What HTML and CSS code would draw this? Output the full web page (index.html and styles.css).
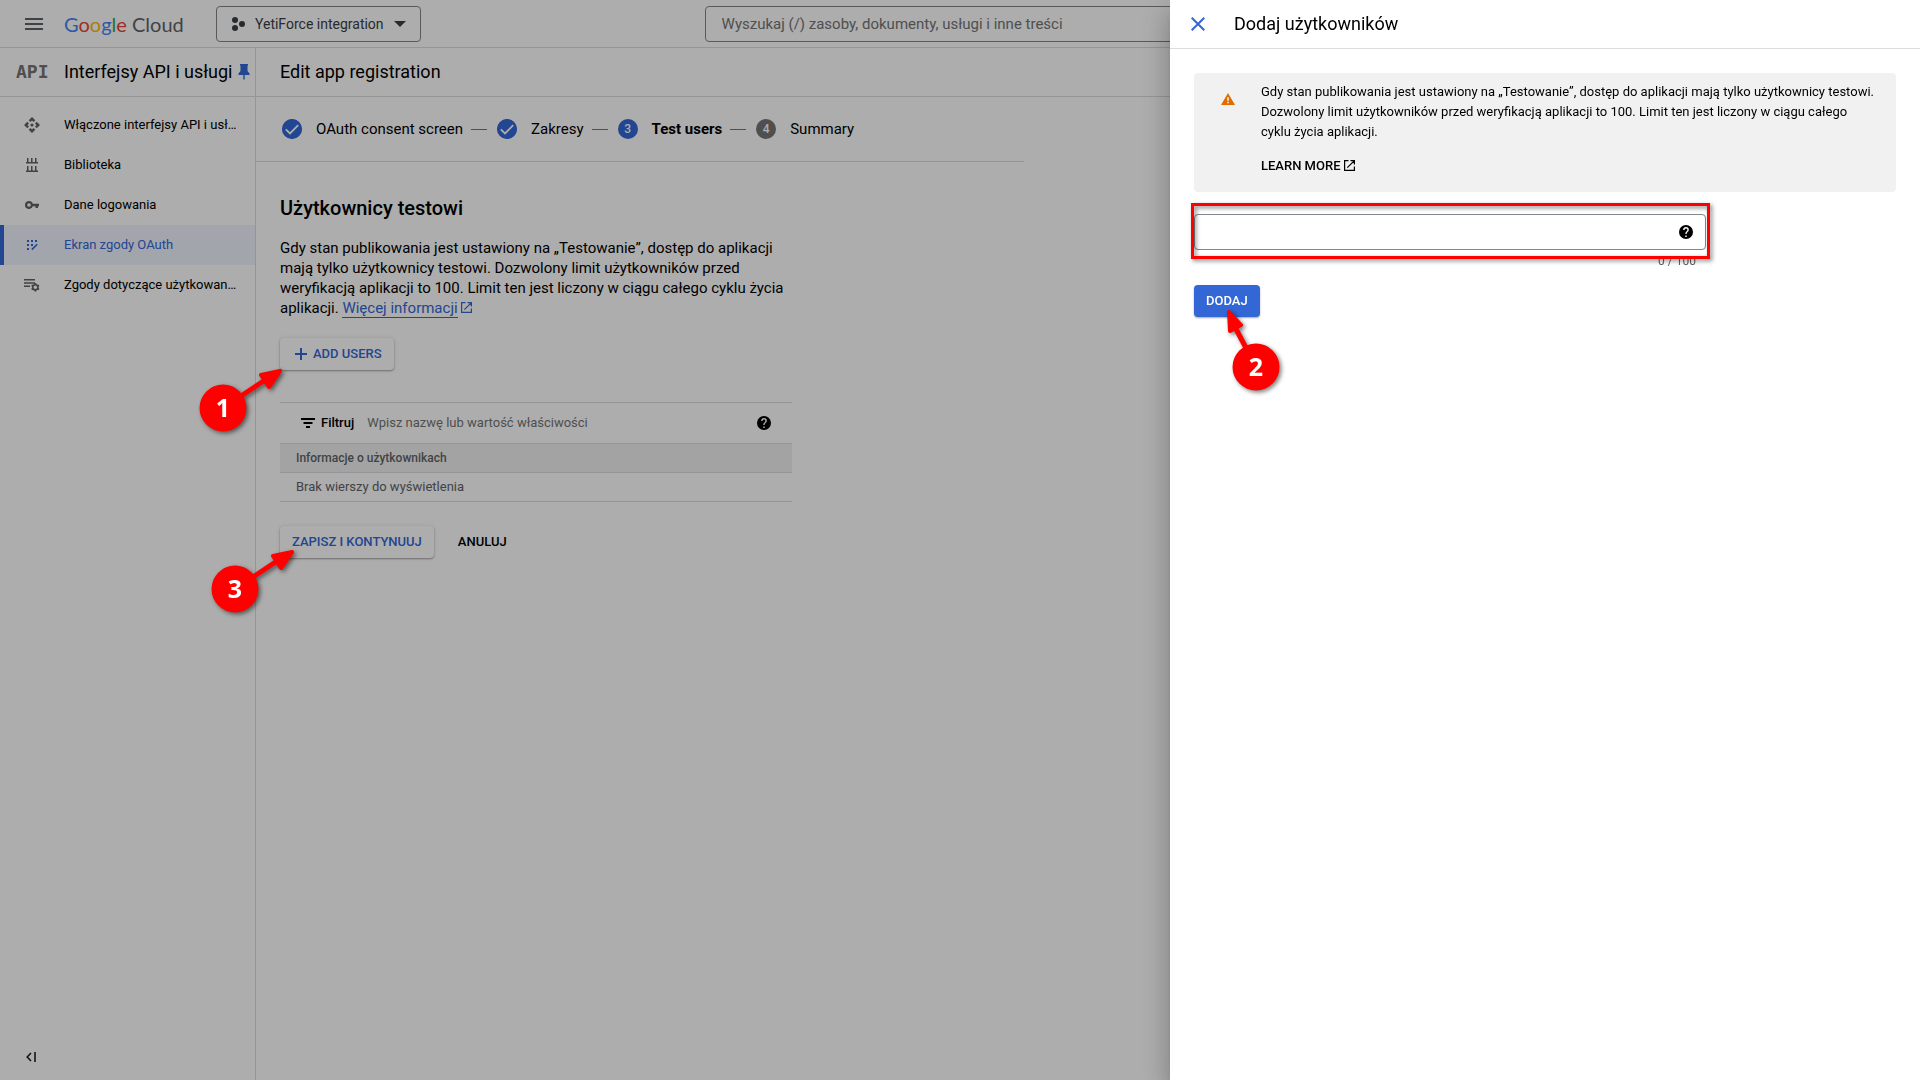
FILE: index.html
```html
<!DOCTYPE html>
<html lang="pl">
<head>
<meta charset="utf-8">
<meta name="viewport" content="width=device-width, initial-scale=1">
<title>Edit app registration</title>
<link rel="stylesheet" href="styles.css">
</head>
<body>
<svg class="defs" aria-hidden="true">
  <symbol id="i-check" viewBox="0 0 20 20"><circle cx="10" cy="10" r="10" fill="#3367d6"/><path d="M3.8 10.3 8 14.4 16.2 6.2" fill="none" stroke="#fff" stroke-width="1.8"/></symbol>
  <symbol id="i-help" viewBox="2 2 20 20"><path fill="currentColor" d="M12 2a10 10 0 1 0 0 20 10 10 0 0 0 0-20zm1 17h-2v-2h2zm2.07-7.75-.9.92C13.45 12.9 13 13.5 13 15h-2v-.5c0-1.1.45-2.1 1.17-2.83l1.24-1.26c.37-.36.59-.86.59-1.41a2 2 0 1 0-4 0H8a4 4 0 1 1 8 0c0 .88-.36 1.68-.93 2.25z"/></symbol>
  <symbol id="i-open" viewBox="0 0 11 11"><path d="M4.5.6H.6v9.800h9.800V6.500M6.500.6h3.900v3.900M10.200.8 3.300 7.700" fill="none" stroke="currentColor" stroke-width="1.200"/></symbol>
  <symbol id="i-arrow" viewBox="0 0 92 72"><path d="M28 44 70 16" stroke="red" stroke-width="5"/><path d="M85 7 66 11 74 23z" fill="red" stroke="red" stroke-width="4" stroke-linejoin="round"/><circle cx="28" cy="44" r="23.500" fill="red"/></symbol>
</svg>

<header class="topbar">
  <button class="icon-btn menu" aria-label="Menu"><svg width="18" height="12" viewBox="0 0 18 12"><path d="M0 0h18v2H0zm0 5h18v2H0zm0 5h18v2H0z" fill="#5f6368"/></svg></button>
  <a class="logo" href="#"><span class="blue">G</span><span class="red">o</span><span class="yellow">o</span><span class="blue">g</span><span class="green">l</span><span class="red">e</span> <span class="cloud">Cloud</span></a>
  <button class="project">
    <svg width="14" height="14" viewBox="0 0 14 14" fill="#3c4043"><circle cx="4" cy="3" r="3"/><circle cx="11" cy="7" r="3"/><circle cx="4" cy="11" r="3"/></svg>
    <span>YetiForce integration</span>
    <svg width="12" height="6" viewBox="0 0 12 6"><path d="M0 0h12L6 6z" fill="#3c4043"/></svg>
  </button>
  <input class="search" type="search" aria-label="Wyszukaj" placeholder="Wyszukaj (/) zasoby, dokumenty, usługi i inne treści">
</header>

<div class="shell">
  <nav class="sidebar" aria-label="Interfejsy API i usługi">
    <div class="side-head">
      <span class="api" aria-hidden="true">API</span>
      <h2 class="bar-title">Interfejsy API i usługi</h2>
      <svg width="12" height="16" viewBox="0 0 12 16"><path d="M2 0h8v1.500H9.500V7L11.500 9.500V11H6.700v4l-.7 1-.7-1v-4H.500V9.500L2.500 7V1.500H2z" fill="#3367d6"/></svg>
    </div>
    <ul class="nav">
      <li><a href="#" class="nav-item"><svg viewBox="0 0 16 16"><path d="M8 0l3.300 3.300L9.500 5 8 3.500 6.500 5 4.700 3.300zM8 16l3.300-3.300L9.500 11 8 12.500 6.500 11l-1.800 1.700zM0 8l3.300-3.300L5 6.500 3.500 8 5 9.500l-1.700 1.800zM16 8l-3.300-3.300L11 6.500 12.500 8 11 9.500l1.700 1.800z"/><circle cx="8" cy="8" r="1.600"/></svg><span>Włączone interfejsy API i usługi</span></a></li>
      <li><a href="#" class="nav-item"><svg viewBox="0 0 16 16"><path d="M3 1h1.500v4H7V1h1.500v4H11V1h1.500v4H14v1.500H2V5h1zM3 9h1.500v4.500H7V9h1.500v4.500H11V9h1.500v4.500H14V15H2v-1.500h1z"/></svg><span>Biblioteka</span></a></li>
      <li><a href="#" class="nav-item"><svg viewBox="0 0 16 16"><path fill-rule="evenodd" d="M5 4a4 4 0 0 1 3.800 2.800H15v2.400h-1V11h-2.500V9.200H8.800A4 4 0 1 1 5 4zm0 2.200a1.800 1.800 0 1 0 0 3.600 1.800 1.800 0 0 0 0-3.600z"/></svg><span>Dane logowania</span></a></li>
      <li><a href="#" class="nav-item active" aria-current="page"><svg viewBox="0 0 16 16"><path d="M3 3h2v2H3zm4 0h2v2H7zm4 0h2v2h-2zM3 7h2v2H3zm4 0h2v2H7zm-4 4h2v2H3z"/><path d="M7.800 12.600 13.200 7.200" stroke="currentColor" stroke-width="1.600"/></svg><span>Ekran zgody OAuth</span></a></li>
      <li><a href="#" class="nav-item"><svg viewBox="0 0 16 16"><path d="M0 2h11v1.500H0zm0 3.300h11v1.500H0zm0 3.300h6v1.500H0z"/><circle cx="11.300" cy="10.300" r="2.600" fill="none" stroke="currentColor" stroke-width="1.600"/><path d="M11.300 6v2m0 4.600v2M7.600 8.200l1.700 1m4 2.300 1.700 1M7.600 12.500l1.700-1m4-2.300 1.700-1" stroke="currentColor" stroke-width="1.800"/></svg><span>Zgody dotyczące użytkowania strony</span></a></li>
    </ul>
    <button class="icon-btn collapse" aria-label="Zwiń"><svg width="10" height="10" viewBox="0 0 10 10" fill="none" stroke="#202124" stroke-width="1.600"><path d="M5 1 1.200 5 5 9M9 0v10"/></svg></button>
  </nav>

  <main class="main">
    <div class="main-head"><h1 class="bar-title">Edit app registration</h1></div>
    <ol class="steps">
      <li><svg class="dot"><use href="#i-check"/></svg><span>OAuth consent screen</span></li>
      <li><svg class="dot"><use href="#i-check"/></svg><span>Zakresy</span></li>
      <li class="current"><b class="dot">3</b><span>Test users</span></li>
      <li class="todo"><b class="dot">4</b><span>Summary</span></li>
    </ol>
    <section class="content">
      <h2 class="section-title">Użytkownicy testowi</h2>
      <p class="lead">Gdy stan publikowania jest ustawiony na „Testowanie”, dostęp do aplikacji mają tylko użytkownicy testowi. Dozwolony limit użytkowników przed weryfikacją aplikacji to 100. Limit ten jest liczony w ciągu całego cyklu życia aplikacji. <a href="#" class="more"><span>Więcej informacji</span> <svg class="open"><use href="#i-open"/></svg></a></p>
      <div class="actions">
        <button class="btn raised add"><svg width="12" height="12" viewBox="0 0 12 12"><path d="M5 0h2v5h5v2H7v5H5V7H0V5h5z" fill="currentColor"/></svg>ADD USERS</button>
        <svg class="callout callout-add"><use href="#i-arrow"/><text x="28" y="53">1</text></svg>
      </div>
      <div class="filter">
        <svg width="14" height="10" viewBox="0 0 14 10"><path d="M0 0h14v2H0zm2.500 4h9v2h-9zM5 8h4v2H5z"/></svg>
        <label for="filter">Filtruj</label>
        <input id="filter" type="text" placeholder="Wpisz nazwę lub wartość właściwości">
        <svg class="help"><use href="#i-help"/></svg>
      </div>
      <table class="users">
        <thead><tr><th>Informacje o użytkownikach</th></tr></thead>
        <tbody><tr><td>Brak wierszy do wyświetlenia</td></tr></tbody>
      </table>
      <div class="actions">
        <button class="btn raised">ZAPISZ I KONTYNUUJ</button>
        <button class="btn plain">ANULUJ</button>
        <svg class="callout callout-save"><use href="#i-arrow"/><text x="28" y="53">3</text></svg>
      </div>
    </section>
  </main>
</div>

<div class="scrim"></div>

<aside class="panel" role="dialog" aria-labelledby="panel-title">
  <div class="panel-head">
    <button class="icon-btn" aria-label="Zamknij"><svg width="14" height="14" viewBox="0 0 14 14"><path d="M.7.7l12.600 12.600M13.300.7.700 13.300" stroke="#3367d6" stroke-width="2"/></svg></button>
    <h2 class="bar-title" id="panel-title">Dodaj użytkowników</h2>
  </div>
  <div class="panel-body">
    <div class="notice">
      <svg width="14" height="12" viewBox="0 0 14 12"><path d="M7 0l7 12H0z" fill="#e06c00"/><path d="M6.300 4.300h1.400v3.500H6.300zm0 4.500h1.400v1.400H6.300z" fill="#fff"/></svg>
      <div>
        <p>Gdy stan publikowania jest ustawiony na „Testowanie”, dostęp do aplikacji mają tylko użytkownicy testowi. Dozwolony limit użytkowników przed weryfikacją aplikacji to 100. Limit ten jest liczony w ciągu całego cyklu życia aplikacji.</p>
        <a class="learn" href="#">LEARN MORE <svg class="open"><use href="#i-open"/></svg></a>
      </div>
    </div>
    <div class="field">
      <input type="text" aria-label="Adresy e-mail użytkowników">
      <svg class="help"><use href="#i-help"/></svg>
      <div class="frame"></div>
    </div>
    <div class="counter">0 / 100</div>
    <div class="actions">
      <button class="btn primary">DODAJ</button>
      <svg class="callout callout-submit"><path d="M36 64 16 26" stroke="red" stroke-width="5"/><path d="M9 9 10 28 21 22z" fill="red" stroke="red" stroke-width="4" stroke-linejoin="round"/><circle cx="36" cy="64" r="23.500" fill="red"/><text x="36" y="73">2</text></svg>
    </div>
  </div>
</aside>
</body>
</html>
```
FILE: styles.css
```css
* { box-sizing: border-box; }
body {
  margin: 0;
  min-height: 100vh;
  display: flex;
  flex-direction: column;
  font: 13px/20px Roboto, "Liberation Sans", sans-serif;
  color: #000;
  background: #fff;
}
h1, h2, p, ul, ol { margin: 0; padding: 0; }
ul, ol { list-style: none; }
a { color: inherit; text-decoration: none; }
button, input { font: inherit; color: inherit; }
svg { flex: none; }
.defs { position: absolute; width: 0; height: 0; }

.icon-btn {
  display: flex;
  align-items: center;
  justify-content: center;
  width: 24px;
  height: 24px;
  padding: 0;
  border: 0;
  background: none;
}

/* Top bar */
.topbar {
  display: flex;
  align-items: center;
  height: 48px;
  padding: 0 22px;
  border-bottom: 1px solid #dadce0;
}
.logo {
  width: 152px;
  margin-left: 18px;
  font: 20px/24px Lato, sans-serif;
  white-space: nowrap;
}
.blue { color: #4285f4; }
.red { color: #ea4335; }
.yellow { color: #fbbc04; }
.green { color: #34a853; }
.cloud { color: #5f6368; }
.project {
  display: flex;
  align-items: center;
  gap: 10px;
  height: 36px;
  padding: 0 14px;
  border: 1px solid #80868b;
  border-radius: 4px;
  background: none;
  color: #3c4043;
  font-size: 14px;
  white-space: nowrap;
}
.search {
  flex: 1;
  min-width: 0;
  max-width: 720px;
  height: 36px;
  margin-left: 284px;
  padding: 0 16px;
  border: 1px solid #80868b;
  border-radius: 4px;
  background: none;
  font-size: 15px;
}
input::placeholder { color: #757575; opacity: 1; }

/* Shell */
.shell { flex: 1; display: flex; }
.sidebar {
  display: flex;
  flex-direction: column;
  width: 256px;
  flex: none;
  border-right: 1px solid #dadce0;
}
.side-head, .main-head {
  display: flex;
  align-items: center;
  height: 49px;
  border-bottom: 1px solid #dadce0;
}
.side-head { padding-left: 16px; }
.main-head { padding-left: 24px; }
.bar-title { font-size: 18px; font-weight: 400; line-height: 24px; white-space: nowrap; }
.api {
  width: 48px;
  font: bold 18px/24px "DejaVu Sans Mono", monospace;
  color: #757575;
}
.side-head svg { margin-left: 6px; }
.nav { padding-top: 8px; }
.nav-item {
  display: flex;
  align-items: center;
  gap: 24px;
  height: 40px;
  padding: 0 16px 0 20px;
  border-left: 4px solid transparent;
}
.nav-item svg { width: 16px; height: 16px; color: #5f6368; fill: currentColor; }
.nav-item span { overflow: hidden; text-overflow: ellipsis; white-space: nowrap; }
.nav-item.active { border-color: #3367d6; background: #f0f4ff; color: #3367d6; }
.nav-item.active svg { color: #3367d6; }
.collapse { margin: auto 0 11px 19px; }

.main { flex: 1; min-width: 0; }
.steps {
  display: flex;
  align-items: center;
  max-width: 768px;
  height: 65px;
  padding-left: 26px;
  border-bottom: 1px solid #dadce0;
  font-size: 15px;
}
.steps li { display: flex; align-items: center; white-space: nowrap; }
.steps li + li::before {
  content: "";
  width: 16px;
  height: 1px;
  margin: 0 10px 0 8px;
  background: #757575;
}
.dot {
  flex: none;
  width: 20px;
  height: 20px;
  margin-right: 14px;
  border-radius: 50%;
  background: #3367d6;
  color: #fff;
  font-size: 12px;
  font-weight: 500;
  line-height: 20px;
  text-align: center;
}
.current span { font-weight: 700; }
.todo .dot { background: #757575; }

.content { max-width: 560px; padding: 34px 24px 24px; }
.section-title { font-size: 20px; font-weight: 500; line-height: 24px; }
.lead { margin: 18px 0 20px; font-size: 15px; }
.more { color: #3367d6; white-space: nowrap; }
.more span { border-bottom: 1px solid #3367d6; }
.open { width: 11px; height: 11px; }

.actions { position: relative; display: flex; gap: 12px; }
.btn {
  display: flex;
  align-items: center;
  gap: 6px;
  height: 32px;
  padding: 0 12px;
  border: 0;
  border-radius: 4px;
  background: none;
  font-weight: 500;
  white-space: nowrap;
}
.raised {
  color: #3367d6;
  background: #fff;
  box-shadow: 0 1px 2px rgba(0, 0, 0, .35), 0 0 4px rgba(0, 0, 0, .08);
}
.add { padding-left: 15px; }
.primary {
  color: #fff;
  background: #3367d6;
  box-shadow: 0 1px 2px rgba(0, 0, 0, .35);
}

.filter {
  display: flex;
  align-items: center;
  height: 41px;
  margin-top: 32px;
  padding: 0 21px;
  border-top: 1px solid #dadce0;
}
.filter label { margin: 0 13px 0 6px; font-weight: 500; }
.filter input { flex: 1; min-width: 0; padding: 0; border: 0; background: none; }
.help { width: 14px; height: 14px; }
.users {
  width: 100%;
  margin-bottom: 24px;
  border-collapse: collapse;
  text-align: left;
}
.users th, .users td {
  height: 29px;
  padding: 0 16px;
  border: solid #dadce0;
  border-width: 1px 0;
  color: #5f6368;
}
.users th { background: #f1f1f1; font-size: 12px; font-weight: 500; }

/* Numbered callouts */
.callout {
  position: absolute;
  z-index: 20;
  width: 92px;
  height: 72px;
  overflow: visible;
  filter: drop-shadow(2px 2px 2px rgba(0, 0, 0, .5));
  pointer-events: none;
}
.callout text {
  fill: #fff;
  font: bold 25px "Noto Sans", sans-serif;
  text-anchor: middle;
}
.callout-add { left: -85px; top: 26px; }
.callout-save { left: -73px; top: 19px; }
.callout-submit { left: 26px; top: 18px; width: 64px; height: 92px; }

/* Side panel */
.scrim { position: fixed; inset: 0; z-index: 10; background: rgba(0, 0, 0, .32); }
.panel {
  position: fixed;
  top: 0;
  right: 0;
  bottom: 0;
  z-index: 15;
  width: 750px;
  max-width: 100%;
  background: #fff;
  box-shadow: 0 8px 10px -5px rgba(0, 0, 0, .2), 0 16px 24px 2px rgba(0, 0, 0, .14), 0 6px 30px 5px rgba(0, 0, 0, .12);
}
.panel-head {
  display: flex;
  align-items: center;
  gap: 24px;
  height: 49px;
  padding: 0 16px;
  border-bottom: 1px solid #dadce0;
}
.panel-body { padding: 24px; }
.notice {
  display: flex;
  gap: 26px;
  padding: 9px 20px 16px 27px;
  border-radius: 4px;
  background: #f1f1f1;
}
.notice > svg { margin-top: 11px; }
.learn { display: inline-block; margin-top: 14px; font-weight: 500; }
.learn .open { vertical-align: -1px; }
.field {
  position: relative;
  display: flex;
  align-items: center;
  max-width: 512px;
  height: 36px;
  margin-top: 22px;
  padding: 0 12px;
  border: 1px solid #80868b;
  border-radius: 4px;
}
.field input { flex: 1; min-width: 0; border: 0; outline: 0; background: none; }
.frame {
  position: absolute;
  inset: -12px -5px -10px -4px;
  border: 3px solid red;
  filter: drop-shadow(2px 2px 2px rgba(0, 0, 0, .5));
  pointer-events: none;
}
.counter {
  max-width: 502px;
  margin: 1px 0 14px;
  color: #5f6368;
  font-size: 12px;
  text-align: right;
}
```
